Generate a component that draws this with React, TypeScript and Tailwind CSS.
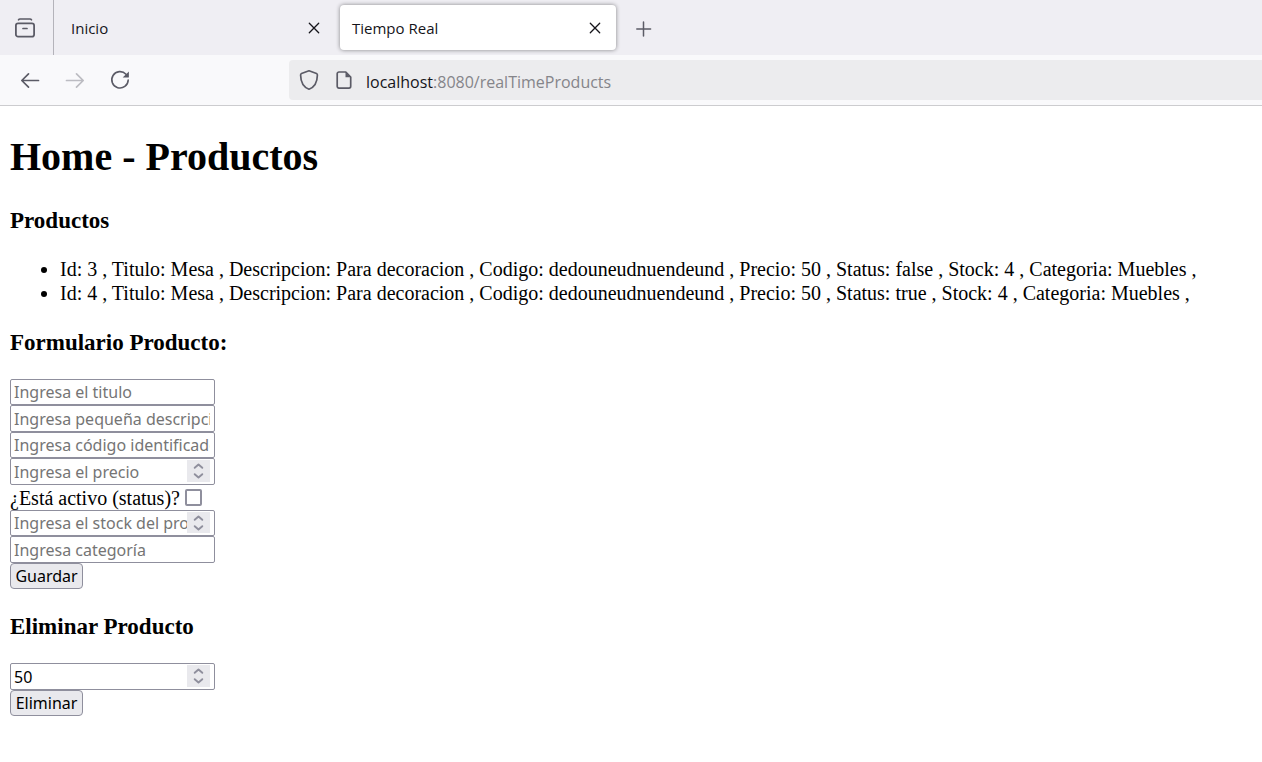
import React from "react";

type Product = {
  id: number;
  title: string;
  description: string;
  code: string;
  price: number;
  status: boolean;
  stock: number;
  category: string;
};

const base = {
  title: "Mesa",
  description: "Para decoracion",
  code: "dedouneudnuendeund",
  price: 50,
  stock: 4,
  category: "Muebles",
};

const products: Product[] = [
  { id: 3, status: false, ...base },
  { id: 4, status: true, ...base },
];

function CloseIcon() {
  return (
    <svg width="12" height="12" viewBox="0 0 12 12" fill="none" stroke="#15141a" strokeWidth="1.3" strokeLinecap="round">
      <path d="M1.300 1.300l9.400 9.400M10.700 1.300L1.300 10.700" />
    </svg>
  );
}

function TabBar() {
  return (
    <div className="flex h-[55px] bg-[#efeef3] text-[15px] text-[#15141a]">
      <button aria-label="Ver pestañas" className="flex w-[54px] shrink-0 items-center border-r border-[#b4b3ba] pl-[14px]">
        <svg width="22" height="22" viewBox="0 0 22 22" fill="none" stroke="#5b5b66" strokeLinecap="round">
          <rect x="1.900" y="6.400" width="18.200" height="13.200" rx="2.200" strokeWidth="1.800" />
          <path d="M4.500 2.900Q5 2 6 2H16Q17 2 17.500 2.900" strokeWidth="1.600" />
          <path d="M9 11.500h4" strokeWidth="1.700" />
        </svg>
      </button>
      <div className="flex w-[281px] shrink-0 items-center justify-between pr-[15px] pl-[17px]">
        <span className="pt-[2px]">Inicio</span>
        <button aria-label="Cerrar Inicio">
          <CloseIcon />
        </button>
      </div>
      <div className="my-[5px] ml-[5px] flex w-[276px] shrink-0 items-center justify-between rounded bg-white pr-[15px] pl-3 shadow-[0_0_4px_rgba(0,0,0,0.45)]">
        <span className="pt-[2px]">Tiempo Real</span>
        <button aria-label="Cerrar Tiempo Real">
          <CloseIcon />
        </button>
      </div>
      <button aria-label="Nueva pestaña" className="ml-5 pt-[2px]">
        <svg width="16" height="16" viewBox="0 0 16 16" fill="none" stroke="#5b5b66" strokeWidth="1.500" strokeLinecap="round">
          <path d="M7.500 1v14M.800 8h13.800" />
        </svg>
      </button>
    </div>
  );
}

function Toolbar() {
  return (
    <div className="flex h-[51px] items-center border-b border-[#cccccf] bg-[#f9f9fb]">
      <div className="flex w-[289px] shrink-0 items-center gap-[25px] pl-5">
        <button aria-label="Atrás">
          <svg width="20" height="20" viewBox="0 0 20 20" fill="none" stroke="#5b5b66" strokeWidth="1.700" strokeLinecap="round" strokeLinejoin="round">
            <path d="M18.500 10.500H2M8.500 3.800L1.800 10.500l6.700 6.700" />
          </svg>
        </button>
        <button aria-label="Adelante" disabled>
          <svg width="20" height="20" viewBox="0 0 20 20" fill="none" stroke="#bcbcc2" strokeWidth="1.700" strokeLinecap="round" strokeLinejoin="round">
            <path d="M1.500 10.500H18M11.500 3.800l6.700 6.700-6.700 6.700" />
          </svg>
        </button>
        <button aria-label="Recargar">
          <svg width="20" height="20" viewBox="0 0 20 20" fill="none">
            <path d="M16 4.200A8.200 8.200 0 1 0 18.200 10" stroke="#5b5b66" strokeWidth="1.600" strokeLinecap="round" />
            <path d="M18.900 1.400v5.600a.6.6 0 0 1-.6.6h-5.600z" fill="#5b5b66" />
          </svg>
        </button>
      </div>
      <div className="flex h-10 min-w-0 flex-1 items-center rounded-l bg-[#ececee] pl-[10px]">
        <svg width="20" height="22" viewBox="0 0 20 22" fill="none" stroke="#5b5b66" strokeWidth="1.700" strokeLinejoin="round" className="shrink-0">
          <path d="M10 1.800L17.500 4.500Q18.400 4.900 18.400 6C18.300 12.800 15.500 18.200 10 20.200C4.500 18.200 1.700 12.800 1.600 6Q1.600 4.900 2.500 4.500Z" />
        </svg>
        <svg width="16" height="20" viewBox="0 0 16 20" fill="none" className="ml-[17px] shrink-0">
          <path d="M3 2h6.800L14.700 7v9.300a1.800 1.800 0 0 1-1.800 1.800H3a1.800 1.800 0 0 1-1.800-1.800V3.800A1.800 1.800 0 0 1 3 2z" stroke="#5b5b66" strokeWidth="1.700" strokeLinejoin="round" />
          <path d="M9.500 2v5.200h5.200z" fill="#5b5b66" />
        </svg>
        <a href="#productos" className="ml-[14px] pt-[3px] text-[16px] text-[#85858a]">
          <span className="text-[#15141a]">localhost</span>:8080/realTimeProducts
        </a>
      </div>
    </div>
  );
}

const box =
  "flex h-[26px] w-[205px] rounded-[2px] border border-[#8f8f9d] bg-white pr-1 pl-[3px] font-['Noto_Sans',sans-serif] text-[16px] even:h-[27px] only:h-[27px]";
const field = "w-full min-w-0 flex-1 bg-transparent outline-none placeholder:text-[#757575]";
const sectionTitle = "text-[23px] leading-[26px] font-bold";

function TextField({ label }: { label: string }) {
  return (
    <div className={box}>
      <input type="text" aria-label={label} placeholder={label} className={field} />
    </div>
  );
}

function NumberField({ label, value }: { label: string; value?: number }) {
  return (
    <div className={box}>
      <input
        type="number"
        aria-label={label}
        placeholder={label}
        defaultValue={value}
        className={`${field} [appearance:textfield] [&::-webkit-inner-spin-button]:appearance-none`}
      />
      <span className="mt-px mb-[2px] flex w-[23px] shrink-0 items-center justify-center bg-[#e9e9ed]">
        <svg width="11" height="16" viewBox="0 0 11 16" fill="none" stroke="#8f8f9d" strokeWidth="1.900" strokeLinecap="round" strokeLinejoin="round">
          <path d="M1.700 4.800l3.800-3.300 3.800 3.300M1.700 11.200l3.800 3.300 3.800-3.300" />
        </svg>
      </span>
    </div>
  );
}

function Button({ children }: { children: React.ReactNode }) {
  return (
    <button
      type="button"
      className="flex h-[26px] w-[73px] items-center justify-center rounded border border-[#8f8f9d] bg-[#e9e9ed] font-['Noto_Sans',sans-serif] text-[16px]"
    >
      {children}
    </button>
  );
}

export default function App() {
  return (
    <div className="min-h-screen bg-white font-['Open_Sans',sans-serif]">
      <header>
        <TabBar />
        <Toolbar />
      </header>
      <main className="px-[10px] pt-7 font-['Liberation_Serif',serif] text-[20px] leading-6 text-black">
        <h1 className="text-[40px] leading-[46px] font-bold">Home - Productos</h1>
        <h3 id="productos" className={`mt-7 ${sectionTitle}`}>Productos</h3>
        <ul className="mt-[23px] list-disc pl-[50px]">
          {products.map((p) => (
            <li key={p.id}>
              {`Id: ${p.id} , Titulo: ${p.title} , Descripcion: ${p.description} , Codigo: ${p.code} , Precio: ${p.price} , Status: ${p.status} , Stock: ${p.stock} , Categoria: ${p.category} ,`}
            </li>
          ))}
        </ul>
        <h3 className={`mt-[25px] ${sectionTitle}`}>Formulario Producto:</h3>
        <form className="mt-[23px]">
          <div>
            <TextField label="Ingresa el titulo" />
            <TextField label="Ingresa pequeña descripción" />
            <TextField label="Ingresa código identificador" />
            <NumberField label="Ingresa el precio" />
          </div>
          <div className="flex h-[25px] items-center gap-[5px]">
            <label htmlFor="status">¿Está activo (status)?</label>
            <input
              id="status"
              type="checkbox"
              className="size-[17px] appearance-none rounded-[2px] border-2 border-[#8f8f9d] bg-white checked:bg-[#0060df]"
            />
          </div>
          <div>
            <NumberField label="Ingresa el stock del producto" />
            <TextField label="Ingresa categoría" />
          </div>
          <Button>Guardar</Button>
        </form>
        <h3 className={`mt-[25px] ${sectionTitle}`}>Eliminar Producto</h3>
        <form className="mt-[23px]">
          <div>
            <NumberField label="Id del producto" value={50} />
          </div>
          <Button>Eliminar</Button>
        </form>
      </main>
    </div>
  );
}
